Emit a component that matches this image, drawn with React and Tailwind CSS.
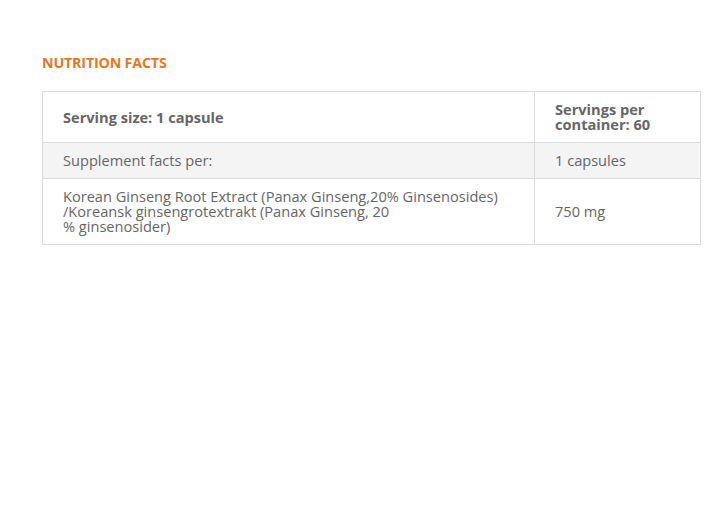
const ROWS = [
  { label: 'Supplement facts per:', value: '1 capsules', shaded: true },
  {
    label: (
      <>
        Korean Ginseng Root Extract (Panax Ginseng,20% Ginsenosides)
        <br />
        /Koreansk ginsengrotextrakt (Panax Ginseng, 20
        <br />
        % ginsenosider)
      </>
    ),
    value: '750 mg',
    shaded: false,
  },
]

const App = () => {
  return (
    <div className="min-h-screen bg-white font-['Open_Sans',sans-serif] text-[#666]">
      <div className="pt-[54px] px-[42px] pr-[23px]">
        <h2 className="text-[14.3px] leading-[18px] font-bold uppercase text-[#e87722] tracking-[-0.2px]">
          Nutrition Facts
        </h2>

        <table className="mt-[19px] w-full border-collapse border border-[#dcdcdc] text-[14.6px] leading-[15px]">
          <tbody>
            <tr>
              <th className="border border-[#dcdcdc] py-[10px] pl-[20px] text-left font-bold text-[#666] w-[492px]">
                Serving size: 1 capsule
              </th>
              <th className="border border-[#dcdcdc] py-[10px] pl-[20px] pr-[20px] text-left font-bold text-[#666]">
                Servings per
                <br />
                container: 60
              </th>
            </tr>
            {ROWS.map((row, i) => (
              <tr key={i} className={row.shaded ? 'bg-[#f4f4f4]' : 'bg-white'}>
                <td className="border border-[#dcdcdc] py-[10px] pl-[20px] pr-[20px]">{row.label}</td>
                <td className="border border-[#dcdcdc] py-[10px] pl-[20px]">{row.value}</td>
              </tr>
            ))}
          </tbody>
        </table>
      </div>
    </div>
  )
}

export default App
